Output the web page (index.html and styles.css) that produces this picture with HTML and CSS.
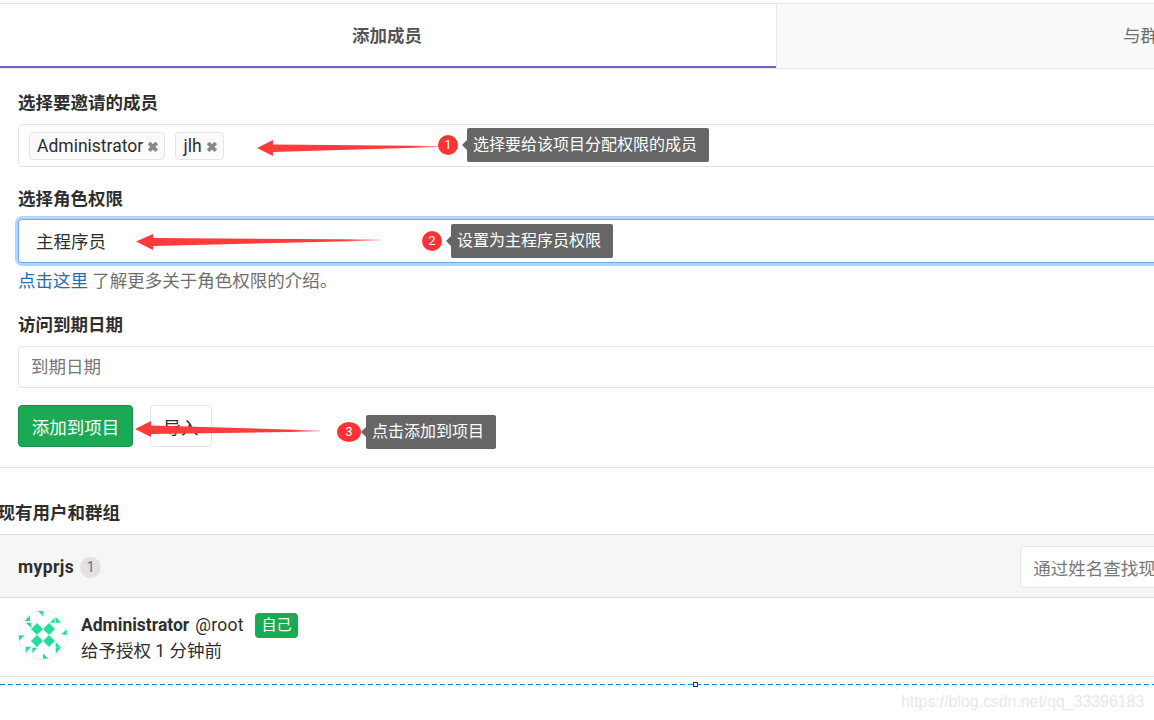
FILE: index.html
```html
<!DOCTYPE html>
<html lang="zh-CN">
<head>
<meta charset="utf-8">
<title>项目成员</title>
<link rel="stylesheet" href="styles.css">
</head>
<body>
<div class="page">
  <nav class="tabs">
    <a class="tab tab-active">添加成员</a>
    <a class="tab tab-other">与群组分享</a>
  </nav>
  <form class="form">
    <div class="label">选择要邀请的成员</div>
    <div class="field field-tags">
      <span class="tag">Administrator <b class="tag-x">✖</b></span>
      <span class="tag">jlh <b class="tag-x">✖</b></span>
    </div>
    <div class="label label-role">选择角色权限</div>
    <div class="field field-focus">主程序员</div>
    <p class="help"><a class="link">点击这里</a> 了解更多关于角色权限的介绍。</p>
    <div class="label label-date">访问到期日期</div>
    <div class="field field-date">到期日期</div>
    <div class="actions">
      <span class="btn btn-primary">添加到项目</span>
      <span class="btn btn-default">导入</span>
    </div>
  </form>
  <hr class="rule">
  <h4 class="section-title">现有用户和群组</h4>
  <section class="panel">
    <header class="panel-head">
      <strong class="project">myprjs</strong>
      <span class="count">1</span>
      <div class="search">通过姓名查找现有成员</div>
    </header>
    <div class="member">
      <svg class="avatar" viewBox="0 0 50 50" aria-hidden="true">
        <circle cx="25" cy="25" r="24.5" fill="#fff" stroke="#f0f0f0"/>
        <g fill="#25dd9b">
          <polygon points="19,13 25,19 19,25 13,19"/>
          <polygon points="31,13 37,19 31,25 25,19"/>
          <polygon points="19,25 25,31 19,37 13,31"/>
          <polygon points="31,25 37,31 31,37 25,31"/>
          <polygon points="20,1 25.3,1 25.3,6.5"/>
          <polygon points="6.7,11 12,5.3 12,11"/>
          <polygon points="7.7,12.7 13.3,12.7 13.3,18"/>
          <polygon points="32,12.7 36.7,7.7 36.7,12.7"/>
          <polygon points="37.7,7 43.3,12.7 37.7,12.7"/>
          <polygon points="43.3,24.3 48.7,19.3 48.7,25"/>
          <polygon points="1,25.3 6.7,25.3 1,30.7"/>
          <polygon points="7.7,36.7 13.3,36.7 7.7,42.7"/>
          <polygon points="14.3,37.7 19.3,37.7 14.3,43.3"/>
          <polygon points="37.7,32 43.3,37.7 37.7,37.7"/>
          <polygon points="37.7,38 42.7,38 37.7,43.7"/>
          <polygon points="25,43.3 30.3,48.7 25,48.7"/>
        </g>
      </svg>
      <div class="member-body">
        <div class="member-name"><strong>Administrator</strong> <span class="handle-name">@root</span> <span class="self">自己</span></div>
        <div class="member-meta">给予授权 1 分钟前</div>
      </div>
    </div>
  </section>
  <div class="dashed"></div>
  <span class="handle"></span>

  <svg class="arrows" viewBox="0 0 1154 720" aria-hidden="true">
    <defs>
      <linearGradient id="fade1" x1="257" x2="440" y1="0" y2="0" gradientUnits="userSpaceOnUse">
        <stop offset="0.85" stop-color="#ff3b3b"/><stop offset="1" stop-color="#ff3b3b" stop-opacity="0.4"/>
      </linearGradient>
      <linearGradient id="fade2" x1="136" x2="380" y1="0" y2="0" gradientUnits="userSpaceOnUse">
        <stop offset="0.85" stop-color="#ff3b3b"/><stop offset="1" stop-color="#ff3b3b" stop-opacity="0.3"/>
      </linearGradient>
      <linearGradient id="fade3" x1="135" x2="320" y1="0" y2="0" gradientUnits="userSpaceOnUse">
        <stop offset="0.85" stop-color="#ff3b3b"/><stop offset="1" stop-color="#ff3b3b" stop-opacity="0.3"/>
      </linearGradient>
    </defs>
    <polygon fill="url(#fade1)" points="257,148 273,140 273,144.5 440,146 440,147 273,152 273,156"/>
    <polygon fill="url(#fade2)" points="136,241.5 153,234 153,238 380,239.5 380,240.5 153,246 153,250"/>
    <polygon fill="url(#fade3)" points="135,429 151,421 151,425.5 320,430.5 320,431.5 151,434 151,437"/>
  </svg>

  <span class="marker marker-1">1</span>
  <span class="tip tip-1">选择要给该项目分配权限的成员</span>
  <span class="marker marker-2">2</span>
  <span class="tip tip-2">设置为主程序员权限</span>
  <span class="marker marker-3">3</span>
  <span class="tip tip-3">点击添加到项目</span>
  <span class="watermark">https://blog.csdn.net/qq_33396183</span>
</div>
</body>
</html>
```
FILE: styles.css
```css
* { box-sizing: border-box; }
html, body { margin: 0; padding: 0; background: #fff; }
body {
  font-family: Roboto, "Noto Sans CJK SC", sans-serif;
  font-size: 17.5px;
  color: #2e2e2e;
}
.page {
  position: relative;
  width: 1154px;
  height: 720px;
  overflow: hidden;
  padding-top: 3px;
}
.tabs {
  display: flex;
  width: 1400px;
  height: 66px;
  border-top: 1px solid #e5e5e5;
  border-bottom: 1px solid #e5e5e5;
}
.tab {
  height: 64px;
  line-height: 64px;
  text-align: center;
  font-size: 17.5px;
}
.tab-active {
  width: 776px;
  font-weight: 700;
  color: #555;
  border-bottom: 2px solid #6b67c7;
  padding-right: 2px;
}
.tab-other {
  flex: 1;
  color: #707070;
  background: #fafafa;
  border-left: 1px solid #e5e5e5;
  text-align: left;
  padding-left: 346px;
}
.form { padding: 0 0 0 18px; width: 1300px; }
.label {
  font-weight: 700;
  line-height: 24px;
  height: 24px;
  margin-top: 22px;
  margin-bottom: 9px;
  color: #2e2e2e;
}
.label-role { margin-top: 20px; margin-bottom: 8px; }
.label-date { margin-top: 20px; margin-bottom: 9px; }
.field {
  border: 1px solid #e5e5e5;
  border-radius: 4px;
  background: #fff;
  height: 43px;
  line-height: 41px;
}
.field-tags { display: flex; align-items: center; gap: 10px; padding-left: 10px; }
.tag {
  height: 28px;
  line-height: 26px;
  padding: 0 5px 0 7px;
  border: 1px solid #e5e5e5;
  border-radius: 4px;
  background: #fafafa;
  color: #2e2e2e;
  white-space: nowrap;
}
.tag-x { color: #888; font-size: 14px; font-weight: 700; }
.field-focus {
  height: 44px;
  line-height: 44px;
  padding-left: 17px;
  border-color: #6aa9ea;
  box-shadow: 0 0 0 3px #b5d5f8;
  color: #2e2e2e;
}
.help { margin: 6px 0 0; line-height: 24px; color: #707070; }
.link { color: #1f6eb5; }
.field-date { height: 42px; line-height: 41px; padding-left: 12px; color: #777; }
.actions { display: flex; gap: 17px; margin-top: 17px; }
.btn {
  height: 42px;
  line-height: 45px;
  border-radius: 4px;
  border: 1px solid #e5e5e5;
  text-align: center;
}
.btn-primary { width: 115px; background: #1aaa55; border-color: #168f48; color: #fff; }
.btn-default { width: 62px; background: #fff; color: #2e2e2e; }
.rule { border: 0; border-top: 1px solid #e5e5e5; margin: 20px 0 0; }
.section-title {
  margin: 33px 0 9px -2.5px;
  font-size: 17.5px;
  font-weight: 700;
  line-height: 24px;
  height: 24px;
  color: #2e2e2e;
}
.panel { width: 1300px; }
.panel-head {
  display: flex;
  align-items: center;
  height: 64px;
  padding: 2px 0 0 18px;
  background: #f6f6f6;
  border-top: 1px solid #dfdfdf;
  border-bottom: 1px solid #dfdfdf;
}
.project { font-weight: 700; font-size: 17.5px; letter-spacing: 0.4px; }
.count {
  margin-left: 6px;
  width: 21px;
  height: 21px;
  line-height: 21px;
  text-align: center;
  border-radius: 50%;
  background: #e2e2e2;
  color: #707070;
  font-size: 14px;
}
.search {
  margin-left: 919px;
  width: 240px;
  height: 42px;
  line-height: 44px;
  padding-left: 12px;
  background: #fff;
  border: 1px solid #e5e5e5;
  border-radius: 4px;
  color: #777;
  white-space: nowrap;
}
.member {
  display: flex;
  gap: 13px;
  height: 79px;
  padding: 12px 0 0 18px;
  border-bottom: 1px solid #e5e5e5;
}
.avatar { width: 50px; height: 50px; flex: none; }
.member-body { padding-top: 2px; }
.member-name { line-height: 26px; height: 26px; display: flex; align-items: center; gap: 6px; }
.member-name strong { font-weight: 700; color: #2e2e2e; }
.handle-name { letter-spacing: 0.3px; }
.member-meta { line-height: 26px; }
.self {
  margin: 0 0 0 5px;
  width: 43px;
  height: 25px;
  line-height: 25px;
  text-align: center;
  font-size: 15px;
  background: #1aaa55;
  color: #fff;
  border-radius: 4px;
}
.dashed {
  margin-top: 7px;
  height: 1px;
  background: repeating-linear-gradient(90deg, #0a88e8 0 5px, transparent 5px 8px);
}
.handle {
  position: absolute;
  left: 693px;
  top: 682px;
  width: 5px;
  height: 5px;
  background: #fff;
  border: 1px solid #333;
}
.arrows { position: absolute; left: 0; top: 0; width: 1154px; height: 720px; pointer-events: none; }
.marker {
  position: absolute;
  width: 20px;
  height: 20px;
  line-height: 20px;
  border-radius: 50%;
  text-align: center;
  background: #ff3333;
  color: #fff;
  font-size: 13px;
}
.marker-1 { left: 438px; top: 135px; }
.marker-2 { left: 422px; top: 231px; }
.marker-3 { left: 337px; top: 422px; width: 24px; }
.tip {
  position: absolute;
  height: 34px;
  line-height: 34px;
  padding: 0 12px 0 6px;
  border-radius: 2px;
  background: #666;
  color: #fff;
  font-size: 16px;
  white-space: nowrap;
}
.tip::before {
  content: "";
  position: absolute;
  left: -5px;
  top: 12px;
  border-top: 5px solid transparent;
  border-bottom: 5px solid transparent;
  border-right: 5px solid #666;
}
.tip-1 { left: 467px; top: 128px; }
.tip-2 { left: 451px; top: 224px; }
.tip-3 { left: 366px; top: 415px; }
.watermark {
  position: absolute;
  left: 901px;
  top: 691px;
  font-family: "Liberation Sans", sans-serif;
  font-size: 15.85px;
  line-height: 22px;
  color: #e8e8e8;
  white-space: nowrap;
}
```
